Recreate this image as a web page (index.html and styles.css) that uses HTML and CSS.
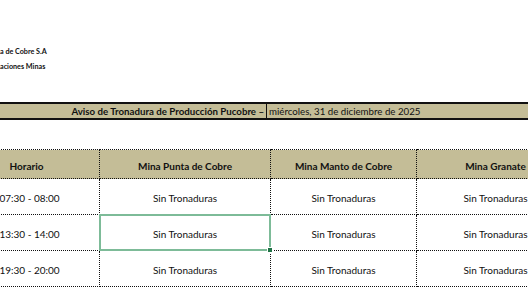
FILE: index.html
```html
<!DOCTYPE html>
<html lang="es">
<head>
<meta charset="utf-8">
<title>Aviso de Tronadura</title>
<link rel="stylesheet" href="styles.css">
</head>
<body>
<div class="sheet">
  <div class="company">
    <div class="company-line">a de Cobre S.A</div>
    <div class="company-line">aciones Minas</div>
  </div>
  <div class="title-bar">
    <div class="title-main">Aviso de Tronadura de Producción Pucobre –</div>
    <div class="title-date">miércoles, 31 de diciembre de 2025</div>
  </div>
  <table class="grid">
    <colgroup>
      <col class="c-hor">
      <col class="c-punta">
      <col class="c-manto">
      <col class="c-granate">
    </colgroup>
    <thead>
      <tr class="head-row">
        <th>Horario</th>
        <th>Mina Punta de Cobre</th>
        <th>Mina Manto de Cobre</th>
        <th>Mina Granate</th>
      </tr>
    </thead>
    <tbody>
      <tr class="data-row">
        <td class="time">07:30 - 08:00</td>
        <td>Sin Tronaduras</td>
        <td>Sin Tronaduras</td>
        <td>Sin Tronaduras</td>
      </tr>
      <tr class="data-row">
        <td class="time">13:30 - 14:00</td>
        <td class="selected"><span class="sel-frame"></span><span class="sel-handle"></span>Sin Tronaduras</td>
        <td>Sin Tronaduras</td>
        <td>Sin Tronaduras</td>
      </tr>
      <tr class="data-row">
        <td class="time">19:30 - 20:00</td>
        <td>Sin Tronaduras</td>
        <td>Sin Tronaduras</td>
        <td>Sin Tronaduras</td>
      </tr>
    </tbody>
  </table>
</div>
</body>
</html>
```
FILE: styles.css
```css
html, body {
  margin: 0;
  padding: 0;
  background: #ffffff;
}
body {
  font-family: Lato, "Open Sans", "Liberation Sans", sans-serif;
  color: #111111;
  overflow: hidden;
  width: 528px;
  height: 297px;
}
.sheet {
  padding-top: 44px;
}
.company {
  display: flex;
  flex-direction: column;
  align-items: flex-start;
}
.company-line {
  white-space: nowrap;
  font-size: 7.2px;
  font-weight: 700;
  line-height: 15px;
  height: 15px;
}
.title-bar {
  margin-top: 28px;
  height: 14px;
  border-top: 2px solid #111;
  border-bottom: 2px solid #111;
  background: #c4bd97;
  display: flex;
  align-items: stretch;
  font-size: 9.7px;
  line-height: 14px;
}
.title-main {
  width: 267px;
  box-sizing: border-box;
  padding-right: 2px;
  text-align: right;
  font-weight: 700;
  white-space: nowrap;
  border-right: 1px solid #111;
}
.title-date {
  padding-left: 2px;
  white-space: nowrap;
}
.grid {
  margin-top: 29px;
  margin-left: -47px;
  border-collapse: collapse;
  table-layout: fixed;
  width: 621px;
  font-size: 10px;
}
.c-hor { width: 146px; }
.c-punta { width: 171px; }
.c-manto { width: 146px; }
.c-granate { width: 158px; }
.grid th, .grid td {
  border: 1px dotted #111;
  text-align: center;
  padding: 0;
  white-space: nowrap;
}
.grid th {
  background: #c4bd97;
  font-weight: 700;
  height: 29px;
  padding-top: 3px;
  box-sizing: border-box;
}
.grid td {
  height: 36px;
  padding-top: 2px;
  box-sizing: border-box;
  background: #fff;
}
.grid td.time {
  padding-left: 6px;
}
.selected {
  position: relative;
}
.sel-frame {
  position: absolute;
  left: -1px;
  top: -1px;
  right: -1px;
  bottom: -1px;
  border: 2px solid #7dbb98;
}
.sel-handle {
  position: absolute;
  right: -3px;
  bottom: -3px;
  width: 4px;
  height: 4px;
  background: #217346;
  border: 1px solid #fff;
}
```
